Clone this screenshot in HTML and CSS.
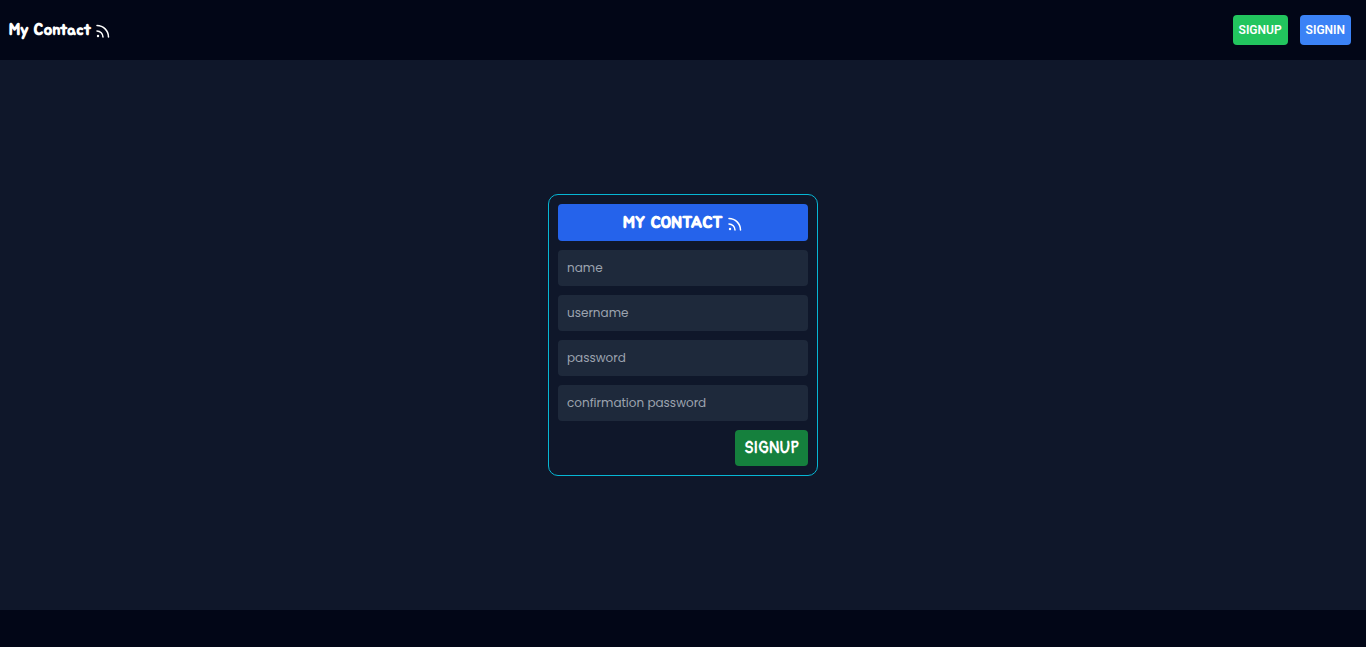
FILE: index.html
```html
<!DOCTYPE html>
<html lang="en">
<head>
<meta charset="utf-8">
<meta name="viewport" content="width=device-width, initial-scale=1">
<title>My Contact</title>
<link rel="stylesheet" href="styles.css">
</head>
<body>
<header class="navbar">
  <a class="brand" href="#">My Contact
    <svg class="feed-icon" viewBox="0 0 16 16" aria-hidden="true"><path d="M2 3.5a11.5 11.5 0 0 1 11.5 11.5M2 9a6 6 0 0 1 6 6"/><circle class="feed-dot" cx="3" cy="14" r="1.2"/></svg>
  </a>
  <nav class="nav-actions">
    <a class="nav-link nav-link-signup" href="#">SIGNUP</a>
    <a class="nav-link nav-link-signin" href="#">SIGNIN</a>
  </nav>
</header>
<main class="content">
  <form class="card">
    <h1 class="card-title">MY CONTACT
      <svg class="feed-icon" viewBox="0 0 16 16" aria-hidden="true"><path d="M2 3.5a11.5 11.5 0 0 1 11.5 11.5M2 9a6 6 0 0 1 6 6"/><circle class="feed-dot" cx="3" cy="14" r="1.2"/></svg>
    </h1>
    <input class="field" type="text" placeholder="name" aria-label="name">
    <input class="field" type="text" placeholder="username" aria-label="username">
    <input class="field" type="password" placeholder="password" aria-label="password">
    <input class="field" type="password" placeholder="confirmation password" aria-label="confirmation password">
    <button class="submit" type="submit">SIGNUP</button>
  </form>
</main>
</body>
</html>
```
FILE: styles.css
```css
* {
  box-sizing: border-box;
}

body {
  margin: 0;
  min-height: 100vh;
  display: flex;
  flex-direction: column;
  background: #020617;
  color: #fff;
  font-family: Poppins, "Open Sans", sans-serif;
}

.navbar {
  display: flex;
  align-items: center;
  justify-content: space-between;
  padding: 15px 15px 15px 9px;
}

.brand {
  display: flex;
  align-items: center;
  gap: 4px;
  color: #fff;
  font: 700 16px/25px Jua, Lato, sans-serif;
  text-decoration: none;
}

.feed-icon {
  width: 16px;
  height: 16px;
  fill: none;
  stroke: currentColor;
  stroke-width: 1.5;
  stroke-linecap: round;
}

.feed-dot {
  fill: currentColor;
  stroke: none;
}

.nav-actions {
  display: flex;
  gap: 12px;
}

.nav-link {
  padding: 6px;
  border-radius: 4px;
  color: #fff;
  font: 600 12px/18px Roboto, sans-serif;
  text-decoration: none;
}

.nav-link-signup {
  background: #22c55e;
}

.nav-link-signin {
  background: #3b82f6;
}

.content {
  flex: 1;
  display: flex;
  align-items: center;
  justify-content: center;
  margin-bottom: 37px;
  background: #0f172a;
}

.card {
  display: flex;
  flex-direction: column;
  gap: 9px;
  width: 270px;
  padding: 9px;
  border: 1px solid #06b6d4;
  border-radius: 10px;
}

.card-title {
  display: flex;
  align-items: center;
  justify-content: center;
  gap: 4px;
  margin: 0;
  padding: 6px;
  border-radius: 4px;
  background: #2563eb;
  font: 700 17px/25px Jua, Lato, sans-serif;
}

.field {
  width: 100%;
  height: 36px;
  padding: 9px;
  border: 0;
  border-radius: 4px;
  background: #1e293b;
  color: #fff;
  font: 400 12px/18px Poppins, "Open Sans", sans-serif;
}

.field::placeholder {
  color: #9ca3af;
}

.submit {
  align-self: flex-end;
  height: 36px;
  padding: 0 9px;
  border: 0;
  border-radius: 4px;
  background: #15803d;
  color: #fff;
  font: 700 16px/24px Pangolin, Lato, sans-serif;
}
```
